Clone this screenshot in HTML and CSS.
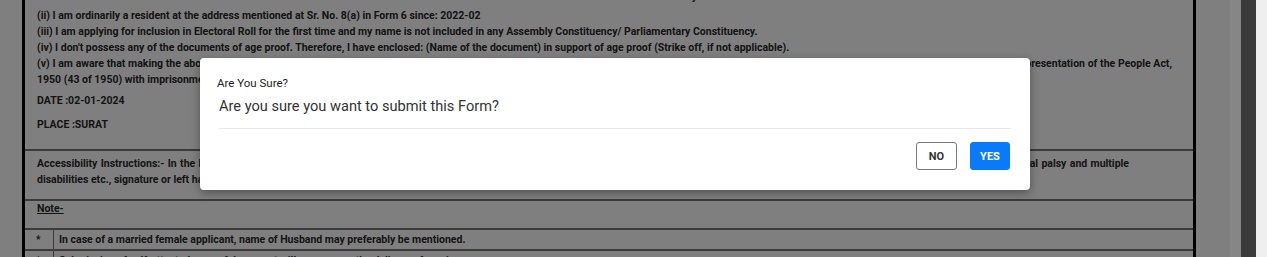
FILE: index.html
```html
<!DOCTYPE html>
<html lang="en">
<head>
<meta charset="utf-8">
<title>Form 6 - Submit</title>
<link rel="stylesheet" href="styles.css">
</head>
<body>
<div class="screen">
  <div class="viewport">
    <div class="doc">
      <div class="row decl">
        <div class="heading">Declaration by</div>
        <div class="line">(ii) I am ordinarily a resident at the address mentioned at Sr. No. 8(a) in Form 6 since: 2022-02</div>
        <div class="line">(iii) I am applying for inclusion in Electoral Roll for the first time and my name is not included in any Assembly Constituency/ Parliamentary Constituency.</div>
        <div class="line">(iv) I don't possess any of the documents of age proof. Therefore, I have enclosed: (Name of the document) in support of age proof (Strike off, if not applicable).</div>
        <div class="line just">(v) I am aware that making the above statement or declaration in relation to this application form which is false and which I either know or believe to be false or not true, is punishable under Section 31 of the Representation of the People Act,</div>
        <div class="line">1950 (43 of 1950) with imprisonment for a term which may extend to one year or with fine or with both.</div>
        <div class="line date">DATE :02-01-2024</div>
        <div class="line place">PLACE :SURAT</div>
      </div>
      <div class="row access">
        <div class="line just short">Accessibility Instructions:- In the light of the difficulties faced by the persons with disabilities such as visual impairment, leprosy cured, locomotor disability, dwarfism, hemophilia, muscular dystrophy, cerebral palsy and multiple</div>
        <div class="line">disabilities etc., signature or left hand thumb impression of the applicant may be affixed by the relative or caretaker.</div>
      </div>
      <div class="row note">
        <div class="line"><span class="u">Note-</span></div>
      </div>
      <div class="row item">
        <div class="star">*</div>
        <div class="itext">In case of a married female applicant, name of Husband may preferably be mentioned.</div>
      </div>
      <div class="row item">
        <div class="star">*</div>
        <div class="itext">Submission of self-attested copy of document will accompany the delivery of services.</div>
      </div>
    </div>
    <div class="overlay">
      <div class="modal">
        <div class="m-title">Are You Sure?</div>
        <div class="m-body">Are you sure you want to submit this Form?</div>
        <div class="m-foot">
          <button class="btn btn-no" type="button">NO</button>
          <button class="btn btn-yes" type="button">YES</button>
        </div>
      </div>
    </div>
  </div>
  <div class="gutter"></div>
  <div class="thumb"></div>
  <div class="track"></div>
</div>
</body>
</html>
```

FILE: styles.css
```css
* { box-sizing: border-box; }
html, body { margin: 0; padding: 0; }
body {
  width: 1267px;
  height: 257px;
  overflow: hidden;
  font-family: Roboto, "Liberation Sans", Arial, sans-serif;
  background: #ffffff;
}
.screen {
  display: flex;
  width: 1267px;
  height: 257px;
}
.viewport {
  position: relative;
  width: 1230px;
  height: 257px;
  overflow: hidden;
  background: #ffffff;
}
.gutter { width: 11px; background: #868686; }
.thumb { width: 15px; background: #3b3b3b; }
.track { width: 11px; background: #efefef; }

.doc {
  margin-left: 22px;
  width: 1174px;
  border-left: 3px solid #000;
  border-right: 3px solid #000;
  color: #2a2a2a;
  font-size: 10.5px;
  font-weight: 700;
}
.row { border-top: 2px solid #777; }
.row:first-child { border-top: 0; }
.line {
  padding-left: 12px;
  line-height: 16px;
  white-space: nowrap;
}
.line.just {
  white-space: normal;
  text-align: justify;
  text-align-last: justify;
  padding-right: 21px;
}
.line.just.short { padding-right: 64px; }
.heading {
  text-align: center;
  font-size: 11px;
  line-height: 14px;
  height: 14px;
  margin: -18px 0 4px;
  padding-left: 106px;
}
.decl { padding-top: 8px; height: 149px; }
.date { margin-top: 5px; }
.place { margin-top: 8px; }
.access { padding-top: 5px; height: 50px; }
.note { height: 29px; padding-top: 0; }
.u { text-decoration: underline; }
.item {
  display: grid;
  grid-template-columns: 28px 1fr;
  height: 21px;
}
.star {
  padding-left: 11px;
  line-height: 19px;
  font-size: 10px;
}
.itext {
  border-left: 1px solid #777;
  padding-left: 5px;
  line-height: 19px;
  white-space: nowrap;
}

.overlay {
  position: absolute;
  inset: 0;
  background: rgba(0, 0, 0, 0.5);
  padding: 58px 0 0 200px;
}
.modal {
  width: 830px;
  height: 132px;
  background: #fff;
  border-radius: 4px;
  box-shadow: 0 3px 10px rgba(0, 0, 0, 0.35);
  padding: 18px 19px 20px 17px;
  font-family: Roboto, "Liberation Sans", Arial, sans-serif;
}
.m-title {
  font-size: 11.5px;
  line-height: 14px;
  color: #222;
}
.m-body {
  margin: 7px 0 0 2px;
  font-size: 14.6px;
  line-height: 18px;
  color: #333;
  padding-bottom: 13px;
  border-bottom: 1px solid #e8e8e8;
}
.m-foot {
  display: flex;
  justify-content: flex-end;
  gap: 13px;
  margin-top: 13px;
  padding-right: 1px;
}
.btn {
  height: 28px;
  width: 41px;
  padding: 0;
  border-radius: 3px;
  font-family: Roboto, "Liberation Sans", Arial, sans-serif;
  font-size: 11px;
  font-weight: 700;
  cursor: pointer;
}
.btn-no {
  background: #fff;
  border: 1px solid #7a7a7a;
  color: #333;
}
.btn-yes {
  width: 40px;
  background: #0a7bf8;
  border: 1px solid #0a7bf8;
  color: #fff;
}
```
